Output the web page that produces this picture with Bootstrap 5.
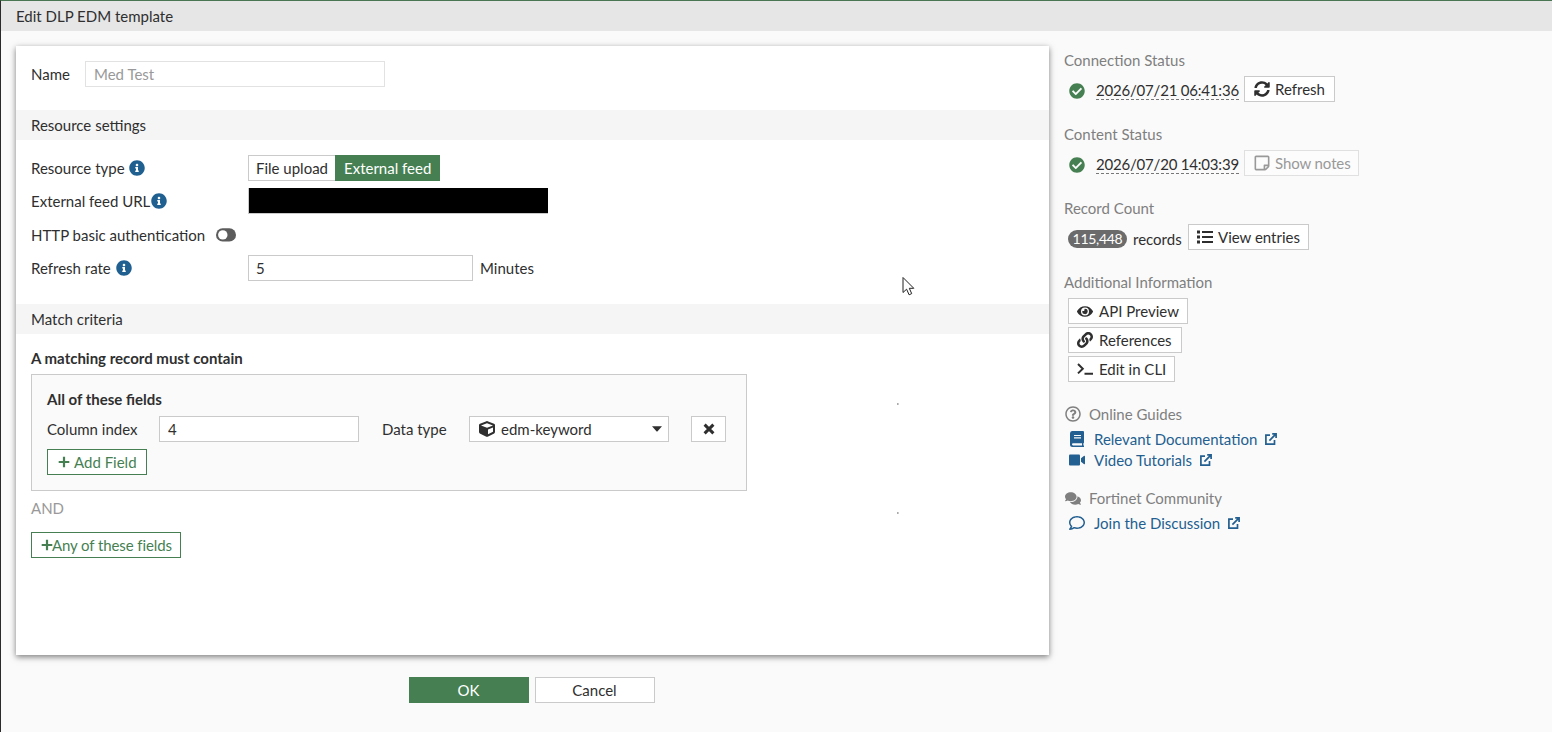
<!DOCTYPE html>
<html lang="en">
<head>
<meta charset="utf-8">
<meta name="viewport" content="width=device-width, initial-scale=1">
<title>Edit DLP EDM template</title>
<link rel="stylesheet" href="https://cdn.jsdelivr.net/npm/bootstrap@5.3.0/dist/css/bootstrap.min.css">
<style>
:root{--ink:#2f2f2f;--green:#467f52;--line:#cacaca;--link:#235f90;--muted:#7f7f7f}
body{font-family:Lato,"Liberation Sans",sans-serif;font-size:15px;line-height:20px;color:var(--ink);background:#fafafa;height:732px;overflow:hidden;border-left:1px solid #2b2b2b;border-top:1px solid #4a7653}
svg{fill:currentColor;flex:none;display:block}
.titlebar{height:30px;background:#e6e6e6;padding:0 15px}
.pane{width:1033px;height:609px;margin:15px 0 0 15px;padding-top:15px;background:#fff;box-shadow:0 2px 6px rgba(0,0,0,.5)}
.section-band{height:30px;background:#f5f5f5;padding:0 15px}
.frow{height:26px}
.flabel{width:217px}
.form-control,.btn,.fake-select{height:26px;border-radius:0;font-size:15px;line-height:20px;border:1px solid var(--line);color:var(--ink);background:#fff;padding:0 7px}
.form-control:disabled{background:#fff;color:#999;border-color:#e2e2e2;padding-left:8px}
.btn{display:inline-flex;align-items:center;white-space:nowrap;padding:0 0 0 9px}
.btn:disabled{opacity:1;color:#999;border-color:#e0e0e0;background:#fcfcfc}
.btn-go,.btn-go:hover{background:var(--green);border-color:var(--green);color:#fff}
.btn-line{color:var(--green);border-color:var(--green)}
.info-mark{color:#1f6091}
.name-row{padding:0 15px;margin-bottom:23px}
.name-row label{width:54px}
.name-row .form-control{width:300px}
.res-rows{padding:15px 15px 0;height:164px;display:grid;grid-template-rows:26px 27px 26px 26px;row-gap:7px;align-items:start}
.res-rows>:last-child{margin-top:0}
.seg-a{width:88px;padding:0 0 0 7px;border-right:0}
.seg-b{width:105px;padding:0 0 0 8px}
.redacted{width:300px;height:26px;background:#000;border-left:1px solid var(--line);border-bottom:1px solid var(--line)}
.toggle{margin-left:11px;margin-top:-1px}
.rate{width:225px;margin-right:7px}
.criteria{padding:14px 15px 0}
.field-box{width:716px;height:117px;border:1px solid var(--line);background:#fafafa;padding:14px 15px;margin-top:6px}
.field-row{margin-top:7px}
.l1{width:112px}
.idx{width:200px;padding-left:8px}
.l2{width:110px;padding-left:23px}
.fake-select{width:200px;padding:0 6px 0 9px}
.fake-select span{margin-left:6px}
.kill{width:35px;margin-left:22px;padding:0;justify-content:center}
.add{width:100px;margin-top:7px;padding:0 0 0 10px}
.add svg{margin-right:4px}
.any{width:150px;padding:0 0 0 9px;letter-spacing:-.1px;font-variant-ligatures:common-ligatures}
.any svg{margin-right:-1px}
.and-word{color:#999;margin:7px 0 14px}
.actions{margin-top:22px;gap:6px;padding-left:13px}
.wide{width:120px;justify-content:center;padding:0}
.side{width:480px;margin:19px 0 0 15px}
.side h2{font-size:15px;line-height:20px;font-weight:400;color:var(--muted);margin:0}
.side .bd{padding-left:4px}
.side .btn svg{margin-right:5px}
.srow{height:26px;margin:6px 0 22px}
.ok{color:var(--green);margin:7px 11px 0 1px}
.stamp{width:143px;height:20px;margin:4px 5px 0 0;padding-top:1px;border-bottom:1px dashed #777;line-height:18px;white-space:nowrap;letter-spacing:-.2px}
.count{background:#6b6b6b;color:#fff;border-radius:9px;height:18px;line-height:18px;width:59px;font-size:14px;text-align:center;margin-top:6px;letter-spacing:-.3px}
.recs{margin:5px 5px 0 6px;width:50px}
.w-refresh{width:91px}
.w-notes{width:115px;letter-spacing:-.1px}
.w-entries{width:121px;padding-left:8px}
.w-api{width:120px}
.w-refs{width:114px}
.w-cli{width:107px}
.tools{gap:3px;margin:6px 0 22px}
.tools .btn svg{margin-right:6px;margin-left:-1px}
.guide svg{margin:0 8px 0 1px}
.glinks{margin:4px 0 18px}
.side a{color:var(--link);text-decoration:none;height:21px}
.side a svg:first-child{margin-left:1px}
.glinks a span{margin:0 7px 0 9px}
.pointer{position:absolute;left:902px;top:276px}
.speck{position:absolute;left:897px;width:2px;height:2px;background:linear-gradient(90deg,#999,#ddd)}
.speck-upper{top:403px}
.speck-lower{top:512px}
</style>
</head>
<body>
<svg width="0" height="0" class="position-absolute">
<symbol id="i-info" viewBox="0 0 512 512"><path d="M256 8C119.043 8 8 119.083 8 256c0 136.997 111.043 248 248 248s248-111.003 248-248C504 119.083 392.957 8 256 8zm0 110c23.196 0 42 18.804 42 42s-18.804 42-42 42-42-18.804-42-42 18.804-42 42-42zm56 254c0 6.627-5.373 12-12 12h-88c-6.627 0-12-5.373-12-12v-24c0-6.627 5.373-12 12-12h12v-64h-12c-6.627 0-12-5.373-12-12v-24c0-6.627 5.373-12 12-12h64c6.627 0 12 5.373 12 12v100h12c6.627 0 12 5.373 12 12v24z"/></symbol>
<symbol id="i-check" viewBox="0 0 512 512"><path d="M504 256c0 136.967-111.033 248-248 248S8 392.967 8 256 119.033 8 256 8s248 111.033 248 248zM227.314 387.314l184-184c6.248-6.248 6.248-16.379 0-22.627l-22.627-22.627c-6.248-6.249-16.379-6.249-22.628 0L216 308.118l-70.059-70.059c-6.248-6.248-16.379-6.248-22.628 0l-22.627 22.627c-6.248 6.248-6.248 16.379 0 22.627l104 104c6.249 6.249 16.379 6.249 22.628.001z"/></symbol>
<symbol id="i-plus" viewBox="0 0 12 12"><path d="M4.900.700h2.200v4.200h4.200v2.200H7.100v4.200H4.900V7.100H.7V4.900h4.200z"/></symbol>
<symbol id="i-ext" viewBox="0 0 14 14"><path d="M6 3.200H1.900v9h8.600V8M8.200 1.900h3.900V6M11.800 2.200 5.400 8.600" fill="none" stroke="currentColor" stroke-width="1.700"/></symbol>
</svg>

<header class="titlebar d-flex align-items-center">Edit DLP EDM template</header>
<div class="d-flex align-items-start">
<main>
  <form class="pane">
    <div class="d-flex align-items-center frow name-row"><label>Name</label><input class="form-control" value="Med Test" disabled></div>
    <div class="section-band d-flex align-items-center">Resource settings</div>
    <div class="res-rows">
      <div class="d-flex align-items-center frow">
        <div class="flabel d-flex align-items-center">Resource type<svg class="info-mark ms-1" width="16" height="16"><use href="#i-info"/></svg></div>
        <div class="btn-group"><button type="button" class="btn seg-a">File upload</button><button type="button" class="btn btn-go seg-b">External feed</button></div>
      </div>
      <div class="d-flex align-items-center frow">
        <div class="flabel d-flex align-items-center">External feed URL<svg class="info-mark" style="margin-left:1px" width="16" height="16"><use href="#i-info"/></svg></div>
        <div class="redacted"></div>
      </div>
      <div class="d-flex align-items-center frow">
        <div class="d-flex align-items-center">HTTP basic authentication<svg class="toggle" width="20" height="14" viewBox="0 0 20 14"><rect y=".3" width="20" height="13.2" rx="6.6" fill="#5c5c5c"/><circle cx="6.8" cy="6.9" r="4.7" fill="#fff"/></svg></div>
      </div>
      <div class="d-flex align-items-center frow">
        <div class="flabel d-flex align-items-center">Refresh rate<svg class="info-mark" style="margin-left:5px" width="16" height="16"><use href="#i-info"/></svg></div>
        <input class="form-control rate" value="5"><span>Minutes</span>
      </div>
    </div>
    <div class="section-band d-flex align-items-center">Match criteria</div>
    <div class="criteria">
      <div class="fw-bold">A matching record must contain</div>
      <div class="field-box">
        <div class="fw-bold">All of these fields</div>
        <div class="d-flex align-items-center frow field-row">
          <label class="l1">Column index</label><input class="form-control idx" value="4">
          <label class="l2">Data type</label>
          <div class="fake-select d-flex align-items-center"><svg width="16" height="16" viewBox="0 0 512 512"><path d="M239.1 6.3l-208 78c-18.7 7-31.1 25-31.1 45v225.1c0 18.2 10.3 34.8 26.5 42.9l208 104c13.5 6.8 29.4 6.8 42.9 0l208-104c16.3-8.1 26.5-24.8 26.5-42.9V129.3c0-20-12.4-37.9-31.1-44.9l-208-78C262 2.2 250 2.2 239.1 6.3zM256 68.4l192 72v1.1l-192 78-192-78v-1.1l192-72zm32 356V275.5l160-65v133.9l-160 80z"/></svg><span>edm-keyword</span><svg class="ms-auto" width="10" height="6" viewBox="0 0 10 6"><path d="M0 .2h10L5.6 5.3q-.6.5-1.2 0z"/></svg></div>
          <button type="button" class="btn kill"><svg width="12" height="12" viewBox="0 0 12 12"><path d="M1.600 1.600l8.800 8.800M10.400 1.600l-8.800 8.800" stroke="currentColor" stroke-width="3"/></svg></button>
        </div>
        <button type="button" class="btn btn-line add"><svg width="12" height="12"><use href="#i-plus"/></svg>Add Field</button>
      </div>
      <div class="and-word">AND</div>
      <button type="button" class="btn btn-line any"><svg width="12" height="12"><use href="#i-plus"/></svg>Any of these fields</button>
    </div>
  </form>
  <div class="d-flex justify-content-center actions"><button class="btn btn-go wide">OK</button><button class="btn wide">Cancel</button></div>
</main>
<aside class="side">
  <h2>Connection Status</h2>
  <div class="bd d-flex srow"><svg class="ok" width="16" height="16"><use href="#i-check"/></svg><span class="stamp">2026/07/21 06:41:36</span><button class="btn w-refresh"><svg width="16" height="16" viewBox="0 0 512 512"><path d="M370.72 133.28C339.458 104.008 298.888 87.962 255.848 88c-77.458.068-144.328 53.178-162.791 126.85-1.344 5.363-6.122 9.15-11.651 9.15H24.103c-7.498 0-13.194-6.807-11.807-14.176C33.933 94.924 134.813 8 256 8c66.448 0 126.791 26.136 171.315 68.685L463.03 40.97C478.149 25.851 504 36.559 504 57.941V192c0 13.255-10.745 24-24 24H345.941c-21.382 0-32.09-25.851-16.971-40.971l41.75-41.749zM32 296h134.059c21.382 0 32.09 25.851 16.971 40.971l-41.75 41.75c31.262 29.273 71.835 45.319 114.876 45.28 77.418-.07 144.315-53.144 162.787-126.849 1.344-5.363 6.122-9.15 11.651-9.15h57.304c7.498 0 13.194 6.807 11.807 14.176C478.067 417.076 377.187 504 256 504c-66.448 0-126.791-26.136-171.315-68.685L48.97 471.03C33.851 486.149 8 475.441 8 454.059V320c0-13.255 10.745-24 24-24z"/></svg>Refresh</button></div>
  <h2>Content Status</h2>
  <div class="bd d-flex srow"><svg class="ok" width="16" height="16"><use href="#i-check"/></svg><span class="stamp">2026/07/20 14:03:39</span><button class="btn w-notes" disabled><svg width="16" height="16" viewBox="-16 16 480 480"><path d="M448 348.106V80c0-26.51-21.49-48-48-48H48C21.49 32 0 53.49 0 80v351.988c0 26.51 21.49 48 48 48h268.118a48 48 0 0 0 33.941-14.059l83.882-83.882A48 48 0 0 0 448 348.106zm-128 80v-76.118h76.118L320 428.106zM400 80v223.988H296c-13.255 0-24 10.745-24 24v104H48V80h352z"/></svg>Show notes</button></div>
  <h2>Record Count</h2>
  <div class="bd d-flex srow"><span class="count">115,448</span><span class="recs">records</span><button class="btn w-entries"><svg width="16" height="14" viewBox="0 0 16 14"><path d="M0 .5h3v3H0zM0 5.500h3v3H0zM0 10.500h3v3H0zM5 1h11v2H5zM5 6h11v2H5zM5 11h11v2H5z"/></svg>View entries</button></div>
  <h2>Additional Information</h2>
  <div class="bd d-flex flex-column align-items-start tools">
    <button class="btn w-api"><svg width="16" height="15" viewBox="0 0 576 512"><path d="M572.52 241.4C518.29 135.59 410.93 64 288 64S57.68 135.64 3.48 241.41a32.35 32.35 0 0 0 0 29.19C57.71 376.41 165.07 448 288 448s230.32-71.64 284.52-177.41a32.35 32.35 0 0 0 0-29.19zM288 400a144 144 0 1 1 144-144 143.93 143.93 0 0 1-144 144zm0-240a95.31 95.31 0 0 0-25.31 3.79 47.85 47.85 0 0 1-66.9 66.9A95.78 95.78 0 1 0 288 160z"/></svg>API Preview</button>
    <button class="btn w-refs"><svg width="16" height="16" viewBox="0 0 512 512"><path d="M326.612 185.391c59.747 59.809 58.927 155.698.36 214.59-.11.12-.24.25-.36.37l-67.2 67.2c-59.27 59.27-155.699 59.262-214.96 0-59.27-59.26-59.27-155.7 0-214.96l37.106-37.106c9.84-9.84 26.786-3.3 27.294 10.606.648 17.722 3.826 35.527 9.69 52.721 1.986 5.822.567 12.262-3.783 16.612l-13.087 13.087c-28.026 28.026-28.905 73.66-1.155 101.96 28.024 28.579 74.086 28.749 102.325.51l67.2-67.19c28.191-28.191 28.073-73.757 0-101.83-3.701-3.694-7.429-6.564-10.341-8.569a16.037 16.037 0 0 1-6.947-12.606c-.396-10.567 3.348-21.456 11.698-29.806l21.054-21.055c5.521-5.521 14.182-6.199 20.584-1.731a152.482 152.482 0 0 1 20.522 17.197zM467.547 44.449c-59.261-59.262-155.69-59.27-214.96 0l-67.2 67.2c-.12.12-.25.25-.36.37-58.566 58.892-59.387 154.781.36 214.59a152.454 152.454 0 0 0 20.521 17.196c6.402 4.468 15.064 3.789 20.584-1.731l21.054-21.055c8.35-8.35 12.094-19.239 11.698-29.806a16.037 16.037 0 0 0-6.947-12.606c-2.912-2.005-6.64-4.875-10.341-8.569-28.073-28.073-28.191-73.639 0-101.83l67.2-67.19c28.239-28.239 74.3-28.069 102.325.51 27.75 28.3 26.872 73.934-1.155 101.96l-13.087 13.087c-4.35 4.35-5.769 10.79-3.783 16.612 5.864 17.194 9.042 34.999 9.69 52.721.509 13.906 17.454 20.446 27.294 10.606l37.106-37.106c59.271-59.259 59.271-155.699.001-214.959z"/></svg>References</button>
    <button class="btn w-cli"><svg width="16" height="14" viewBox="0 0 16 14"><path d="M1 2l4.800 4.700L1 11.400M7.500 11.700H16" fill="none" stroke="currentColor" stroke-width="2"/></svg>Edit in CLI</button>
  </div>
  <h2 class="guide d-flex align-items-center"><svg width="16" height="16" viewBox="0 0 512 512"><path d="M256 8C119.043 8 8 119.083 8 256c0 136.997 111.043 248 248 248s248-111.003 248-248C504 119.083 392.957 8 256 8zm0 448c-110.532 0-200-89.431-200-200 0-110.495 89.472-200 200-200 110.491 0 200 89.471 200 200 0 110.53-89.431 200-200 200zm107.244-255.2c0 67.052-72.421 68.084-72.421 92.863V300c0 6.627-5.373 12-12 12h-45.647c-6.627 0-12-5.373-12-12v-8.659c0-35.745 27.1-50.034 47.579-61.516 17.561-9.845 28.324-16.541 28.324-29.579 0-17.246-21.999-28.693-39.784-28.693-23.189 0-33.894 10.977-48.942 29.969-4.057 5.12-11.46 6.071-16.666 2.124l-27.824-21.098c-5.107-3.872-6.251-11.066-2.644-16.363C184.846 131.491 214.94 112 261.794 112c49.071 0 101.45 38.304 101.45 88.8zM298 368c0 23.159-18.841 42-42 42s-42-18.841-42-42 18.841-42 42-42 42 18.841 42 42z"/></svg>Online Guides</h2>
  <div class="bd glinks">
    <a href="#" class="d-flex align-items-center"><svg width="16" height="16" viewBox="0 0 16 16"><path fill-rule="evenodd" d="M3 0h11q1 0 1 1v10.500q0 .6-.6.8v2.200h.6V16H3.500Q1 16 1 13.500V2.500Q1 0 3 0zM5 4v1.100h7V4zM5 6.300v1.100h7V6.300zM4 12.200q-1 0-1 1.100t1 1.200h9v-2.300z"/></svg><span>Relevant Documentation</span><svg width="14" height="14"><use href="#i-ext"/></svg></a>
    <a href="#" class="d-flex align-items-center"><svg width="16" height="12" viewBox="0 0 16 12"><rect y=".5" width="11" height="11" rx="1"/><path d="M12 4.200 14.800 2q1.200-.7 1.200.5v7q0 1.200-1.200.5L12 7.800z"/></svg><span>Video Tutorials</span><svg width="14" height="14"><use href="#i-ext"/></svg></a>
  </div>
  <h2 class="guide d-flex align-items-center"><svg width="16" height="15" viewBox="0 0 576 512"><path d="M416 192c0-88.4-93.1-160-208-160S0 103.6 0 192c0 34.3 14.1 65.9 38 92-13.4 30.2-35.5 54.2-35.8 54.5-2.2 2.3-2.8 5.7-1.5 8.7S4.8 352 8 352c36.6 0 66.9-12.3 88.7-25 32.2 15.7 70.3 25 111.3 25 114.9 0 208-71.6 208-160zm122 220c23.9-26 38-57.7 38-92 0-66.9-53.5-124.2-129.3-148.1.9 6.6 1.3 13.3 1.3 20.1 0 105.9-107.7 192-240 192-10.8 0-21.3-.8-31.7-1.9C207.8 439.6 281.8 480 368 480c41 0 79.1-9.2 111.3-25 21.8 12.7 52.1 25 88.7 25 3.2 0 6.1-1.9 7.3-4.8 1.3-2.9.7-6.3-1.5-8.7-.3-.3-22.4-24.2-35.8-54.5z"/></svg>Fortinet Community</h2>
  <div class="bd glinks">
    <a href="#" class="d-flex align-items-center"><svg width="16" height="16" viewBox="0 0 512 512"><path d="M256 32C114.6 32 0 125.1 0 240c0 47.6 19.9 91.2 52.9 126.3C38 405.7 7 439.1 6.5 439.5c-6.6 7-8.4 17.2-4.6 26S14.4 480 24 480c61.5 0 110-25.7 139.1-46.3C192 442.8 223.2 448 256 448c141.4 0 256-93.1 256-208S397.4 32 256 32zm0 368c-26.7 0-53.1-4.1-78.4-12.1l-22.7-7.2-19.5 13.8c-14.3 10.1-33.9 21.4-57.5 29 7.3-12.1 14.4-25.7 19.9-40.2l10.6-28.1-20.6-21.8C69.7 314.1 48 282.2 48 240c0-88.2 93.3-160 208-160s208 71.8 208 160-93.3 160-208 160z"/></svg><span>Join the Discussion</span><svg width="14" height="14"><use href="#i-ext"/></svg></a>
  </div>
</aside>
</div>
<svg class="pointer" width="13" height="20" viewBox="0 0 13 20"><path d="M1 1.500v15l3.600-3.300 2.500 5.600 2.600-1.200-2.400-5.300h4.500z" fill="#fff" stroke="#222" stroke-width="1"/></svg>
<i class="speck speck-upper"></i><i class="speck speck-lower"></i>
<script src="https://cdn.jsdelivr.net/npm/bootstrap@5.3.0/dist/js/bootstrap.bundle.min.js"></script>
</body>
</html>
